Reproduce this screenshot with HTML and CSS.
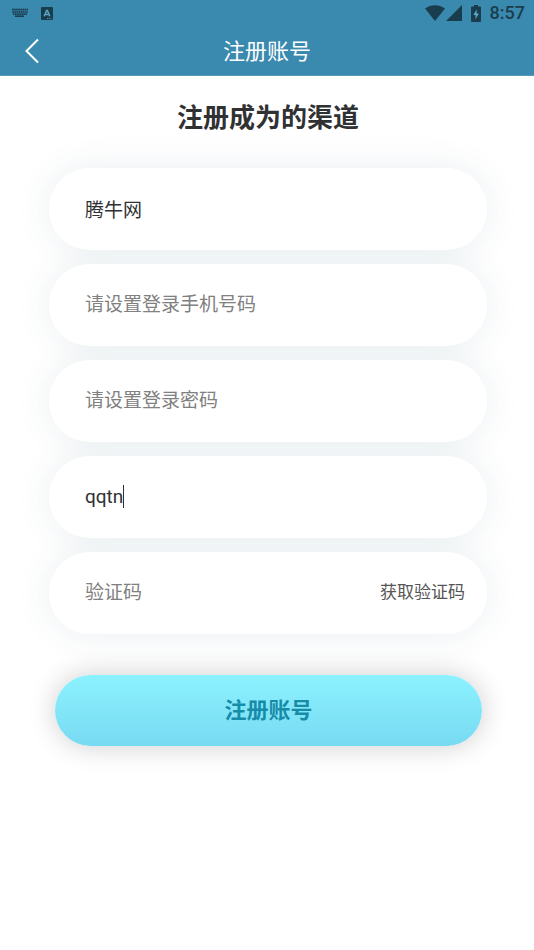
FILE: index.html
```html
<!DOCTYPE html>
<html lang="zh-CN">
<head>
<meta charset="utf-8">
<meta name="viewport" content="width=device-width, initial-scale=1">
<title>注册账号</title>
<link rel="stylesheet" href="styles.css">
</head>
<body>
<header class="top">
  <div class="status">
    <svg class="keyboard" width="16" height="10" viewBox="0 0 16 10" aria-hidden="true">
      <path d="M0 1.5h16M.3 4h15.4M1 6.2h14" fill="none" stroke="currentColor" stroke-width="1.5" stroke-dasharray="1.6 .5"/>
      <path d="M3 8.2h9" stroke="currentColor" stroke-width="1.6"/>
      <path d="M0 .7h16v4.4l-1.3 2H1.3L0 5.1z" fill="currentColor" opacity=".2"/>
    </svg>
    <svg width="12" height="13" viewBox="0 0 12 13" aria-hidden="true">
      <rect width="12" height="13" rx="1" fill="currentColor"/>
      <path d="M3.2 9.3 5.6 3.5h.8l2.4 5.800M4.100 7.500h3.800" fill="none" stroke="#5ba5c7" stroke-width="1.5"/>
      <path d="M6 11.5h5" stroke="#5ba5c7" stroke-width=".8" stroke-dasharray="1 .6"/>
    </svg>
    <span class="spacer"></span>
    <svg width="20" height="16" viewBox="0 0 20 16" aria-hidden="true">
      <path d="M0 3.6C5.6-.9 14.4-.9 20 3.6L10 16z" fill="currentColor"/>
    </svg>
    <svg class="signal" width="16" height="16" viewBox="0 0 16 16" aria-hidden="true">
      <path d="M16 0v16H0z" fill="currentColor"/>
    </svg>
    <svg class="battery" width="10" height="17" viewBox="0 0 10 17" aria-hidden="true">
      <path d="M3 0h4v1.5h2a1 1 0 0 1 1 1V16a1 1 0 0 1-1 1H1a1 1 0 0 1-1-1V2.5a1 1 0 0 1 1-1h2z" fill="currentColor"/>
      <path d="M5.7 4.5 2.3 10h2.200v4.300L7.900 8.600H5.700z" fill="#5ba5c7"/>
    </svg>
    <time class="clock">8:57</time>
  </div>
  <nav class="bar">
    <button class="back" type="button" aria-label="返回">
      <svg width="14" height="26" viewBox="0 0 14 26" aria-hidden="true">
        <path d="M13 1.5 1.5 13 13 24.5" fill="none" stroke="currentColor" stroke-width="2"/>
      </svg>
    </button>
    <span class="bar-title">注册账号</span>
  </nav>
</header>
<main class="page">
  <h1 class="heading">注册成为的渠道</h1>
  <form class="form">
    <div class="field"><input class="input" type="text" aria-label="姓名" value="腾牛网"></div>
    <div class="field"><input class="input" type="tel" aria-label="手机号码" placeholder="请设置登录手机号码"></div>
    <div class="field"><input class="input" type="password" aria-label="登录密码" placeholder="请设置登录密码"></div>
    <div class="field"><input class="input active" type="text" aria-label="邀请码" value="qqtn"><span class="caret"></span></div>
    <div class="field">
      <input class="input" type="text" aria-label="验证码" placeholder="验证码">
      <button class="send" type="button">获取验证码</button>
    </div>
    <button class="submit" type="submit">注册账号</button>
  </form>
</main>
</body>
</html>
```
FILE: styles.css
```css
* {
  box-sizing: border-box;
}

body {
  margin: 0;
  background: #fff;
  color: #303133;
  font-family: Roboto, "Noto Sans CJK SC", sans-serif;
}

button,
input {
  margin: 0;
  padding: 0;
  border: 0;
  background: none;
  color: inherit;
  font: inherit;
}

svg {
  display: block;
}

.top {
  background: #3a8aaf;
  border-bottom: 1px solid #579bbb;
}

.status {
  display: flex;
  align-items: center;
  height: 26px;
  padding: 0 9px 0 12px;
  color: #1a3d4d;
}

.keyboard {
  margin-right: 13px;
}

.signal {
  margin-left: 1px;
}

.battery {
  margin: 0 9px;
}

.spacer {
  flex: 1;
}

.clock {
  font-size: 18px;
  font-weight: 500;
  line-height: 28px;
}

.bar {
  display: grid;
  grid-template-columns: 64px 1fr 64px;
  align-items: center;
  height: 49px;
  color: #fff;
}

.back {
  display: flex;
  align-items: center;
  height: 48px;
  padding-left: 25px;
}

.bar-title {
  padding-top: 2px;
  font-size: 22px;
  line-height: 48px;
  text-align: center;
}

.page {
  padding: 22px 47px 48px 49px;
}

.heading {
  margin: 0 0 30px;
  font-size: 26px;
  font-weight: 700;
  line-height: 40px;
  text-align: center;
}

.form {
  display: flex;
  flex-direction: column;
  gap: 14px;
  isolation: isolate;
}

.field {
  position: relative;
  display: flex;
  align-items: center;
  height: 82px;
  padding: 0 22px 2px 36px;
  border-radius: 41px;
  background: #fff;
}

.field::before {
  content: "";
  position: absolute;
  inset: 0;
  z-index: -1;
  border-radius: 41px;
  box-shadow: 0 0 36px rgba(20, 80, 100, 0.09);
}

.input {
  flex: 1;
  min-width: 0;
  height: 40px;
  outline: 0;
  font-size: 19px;
}

.input::placeholder {
  color: #808080;
  opacity: 1;
}

.active {
  flex: none;
  field-sizing: content;
}

.caret {
  width: 1px;
  height: 23px;
  background: #303133;
}

.send {
  color: #555;
  font-size: 17px;
  line-height: 40px;
}

.submit {
  height: 71px;
  margin: 27px 5px 0 6px;
  padding-bottom: 6px;
  border-radius: 36px;
  background: linear-gradient(#8cf2ff, #78daf2);
  box-shadow: 0 0 28px rgba(0, 0, 0, 0.2);
  color: #178ca8;
  font-size: 22px;
  font-weight: 700;
}
```
